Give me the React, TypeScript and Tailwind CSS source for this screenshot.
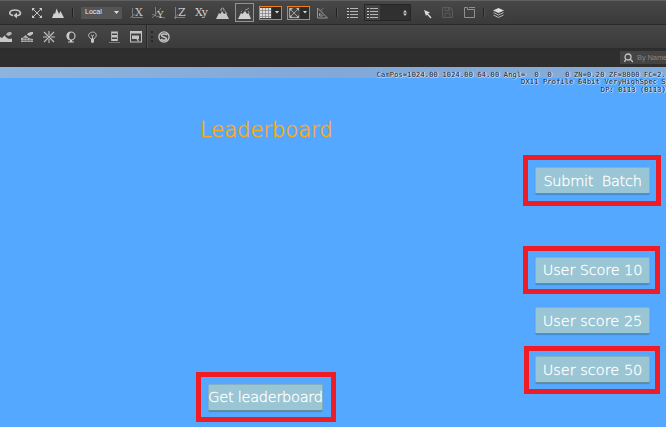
import type { ReactNode } from "react";

type IconProps = { w: number; h?: number; className?: string; children: ReactNode };

function Icon({ w, h = 12, className = "", children }: IconProps) {
  return (
    <svg
      width={w}
      height={h}
      viewBox={`0 0 ${w} ${h}`}
      fill="none"
      stroke="#c4c4c4"
      className={`shrink-0 ${className}`}
    >
      {children}
    </svg>
  );
}

function Separator({ className = "" }: { className?: string }) {
  return <div className={`h-[9px] w-0.5 shrink-0 border-l border-[#222] bg-[#505050] ${className}`} />;
}

function ActiveFrame({ className, children }: { className: string; children: ReactNode }) {
  return (
    <div className={`shrink-0 bg-[#ee7c18] p-px ${className}`}>
      <div className="flex h-full w-full items-center justify-center bg-[#444]">{children}</div>
    </div>
  );
}

function Caret() {
  return (
    <span className="flex h-full flex-1 items-center justify-center bg-[#2c2c2c]">
      <svg width="4" height="3" viewBox="0 0 4 3">
        <path d="M0 0h4L2 2.5z" fill="#ddd" />
      </svg>
    </span>
  );
}

function ListGlyph() {
  return (
    <>
      <path d="M3 1.500h8M3 4.500h8M3 7.500h8M3 10.500h8" stroke="#b4b4b4" />
      <path d="M0 1.500h2M0 4.500h2M0 7.500h2M0 10.500h2" stroke="#cfcfcf" />
    </>
  );
}

const axisLines = {
  X: "M2.500 1v9.500H13M0 11l5-4",
  Y: "M3.500 0v9L13 11M0 11L9 1M0 7l4 2",
  Z: "M1.500 0v12M0 10.500h11M1 11l3-4",
};

function AxisIcon({ letter, className }: { letter: "X" | "Y" | "Z"; className: string }) {
  return (
    <Icon w={14} className={className}>
      <path d={axisLines[letter]} stroke="#858585" strokeWidth=".9" />
      <text
        x={letter === "Z" ? 4 : 5}
        y={letter === "Y" ? 10.5 : 8.5}
        fill="#c5c5c5"
        stroke="none"
        fontSize={letter === "Y" ? 10 : 11}
        className="font-['DejaVu_Serif',serif]"
      >
        {letter}
      </text>
    </Icon>
  );
}

function MainToolbar() {
  return (
    <div className="flex h-[25px] items-center border-t border-b border-t-[#606060] border-b-[#292929] bg-linear-to-b from-[#474747] to-[#3a3a3a]">
      <Icon w={13} className="ml-[9px]">
        <path d="M4 8.500C-1 7.500 0 3 6 3s7 4.500 3 5.500H7" strokeWidth="1.7" />
        <path d="M8 5.500v6L4.500 8.500z" fill="#c8c8c8" stroke="none" />
      </Icon>
      <Icon w={10} h={10} className="ml-[10px]">
        <path d="M1 1l8 8M9 1L1 9" strokeWidth="1" />
        <path d="M0 0h3L0 3zM10 0v3L7 0zM0 10V7l3 3zM10 10H7l3-3z" fill="#c8c8c8" stroke="none" />
      </Icon>
      <Icon w={12} h={10} className="ml-[10px]">
        <path d="M0 10l2-5 1 1 1.500-5.500L7 6l1.500-3L10 6l2 4z" fill="#d0d0d0" stroke="none" />
      </Icon>
      <Separator className="ml-[8px]" />
      <div className="ml-[7px] flex h-3 w-[41px] shrink-0 items-center justify-between rounded-[1px] bg-[#555] pr-[3px] pl-1 font-['Liberation_Sans',sans-serif] text-[7px] text-[#eee]">
        Local
        <svg width="5" height="3" viewBox="0 0 5 3">
          <path d="M0 0h5L2.500 3z" fill="#ddd" />
        </svg>
      </div>
      <AxisIcon letter="X" className="ml-[8px]" />
      <AxisIcon letter="Y" className="ml-[8px]" />
      <AxisIcon letter="Z" className="ml-[8px]" />
      <span className="ml-[7px] w-[14px] shrink-0 font-['DejaVu_Serif',serif] text-[11px] leading-3 tracking-[-1px] text-[#d2d2d2]">
        Xy
      </span>
      <Icon w={13} className="ml-[7px]">
        <path d="M0 12l3-6 1.500 1L6 4l2 3 2-1 3 6z" fill="#c8c8c8" stroke="none" />
        <path d="M5 4V2l1.500-1L8 2v2M9 4l2 3" stroke="#aaa" />
      </Icon>
      <ActiveFrame className="ml-[6px] h-[19px] w-[19px]">
        <Icon w={13}>
          <path d="M0 12l3-6 1.500 1L7 4l2 3 1.500-1L13 12z" fill="#d2d2d2" stroke="none" />
          <path d="M7 3l2-.5L11 1M10 4l1.500 2M3 5l1-1" stroke="#9a9a9a" />
        </Icon>
      </ActiveFrame>
      <ActiveFrame className="ml-[5px] h-[14px] w-[23px]">
        <Icon w={12}>
          <path d="M0 1h11v10H0z" fill="#dedede" stroke="none" />
          <path d="M2.500 1v10M5.500 1v10M8.500 1v10M0 3.500h11M0 6.500h11M0 9.500h11" stroke="#888" strokeWidth=".8" />
        </Icon>
        <Caret />
      </ActiveFrame>
      <ActiveFrame className="ml-[5px] h-[14px] w-[23px]">
        <Icon w={12}>
          <path d="M1.500 1v9.500H11M3 3l7 7M10 2L3 9" stroke="#999" />
          <path d="M2 1h3L2 4zM11 1v3L8 1zM2 11V8l3 3zM11 11H8l3-3z" fill="#bbb" stroke="none" />
        </Icon>
        <Caret />
      </ActiveFrame>
      <Icon w={12} className="ml-[6px]">
        <path d="M1.500 1v10h10zM3.500 6v3h3z" stroke="#959595" />
        <path d="M3 4l5-3M5 3l3 6" stroke="#777" strokeWidth=".8" />
      </Icon>
      <Separator className="ml-[8px]" />
      <Icon w={11} className="ml-[9px]">
        <ListGlyph />
      </Icon>
      <div className="ml-[6px] flex h-[17px] w-[47px] shrink-0 items-center justify-between rounded-[1px] border border-[#252525] bg-[#303030] pr-[3px]">
        <div className="flex h-full w-[15px] items-center justify-center bg-[#424242]">
          <Icon w={11}>
            <ListGlyph />
          </Icon>
        </div>
        <svg width="4" height="6" viewBox="0 0 4 6">
          <path d="M0 2.500L2 0l2 2.500zM0 3.500h4L2 6z" fill="#ccc" />
        </svg>
      </div>
      <Icon w={8} h={9} className="mt-1 ml-[13px]">
        <path d="M0 0l6 2.500-2 1L7.500 7.500l-1 1L3 4.500 2 6z" fill="#ddd" stroke="none" />
      </Icon>
      <Icon w={11} h={11} className="ml-[10px]">
        <path d="M.5.5h8l2 2v8H.5zM3 .5v3h5v-3M3 10V6h5v4M6.500 1v2" stroke="#5b5b5b" />
      </Icon>
      <Icon w={11} h={11} className="ml-[11px]">
        <path d="M.5 10.500V.5h3v2h7v8zM5 .5h6" stroke="#909090" />
      </Icon>
      <Separator className="ml-[8px]" />
      <Icon w={11} className="ml-[8px]">
        <path d="M0 3.500L5.500 1 11 3.500 5.500 6z" fill="#ddd" stroke="none" />
        <path d="M.5 5.500l5 2.500 5-2.500M.5 8l5 2.500 5-2.500" stroke="#b5b5b5" />
      </Icon>
    </div>
  );
}

function SecondToolbar() {
  return (
    <div className="flex h-6 items-center border-b border-[#2c2c2c] bg-linear-to-b from-[#464646] to-[#3b3b3b]">
      <Icon w={12}>
        <path d="M0 6l2 1 2.500-2.500L7 7l2 1 3-.5V11H0z" fill="#c8c8c8" stroke="none" />
        <path d="M6 4l1-2 2-1h2l1 2-3 2z" fill="#b4b4b4" stroke="none" />
      </Icon>
      <Icon w={13} className="ml-[9px]">
        <path d="M0 7l2-.5L4.500 4 7 6.500l2 1 3 .5v3H0z" fill="#b0b0b0" stroke="none" />
        <path d="M6 4l1-2 3-1h2v2l-3 2z" fill="#c4c4c4" stroke="none" />
        <path d="M0 9.500h12M2 7.500h5M3 6v5M6 7v4M9 8v3" stroke="#5b5b5b" strokeWidth=".6" />
      </Icon>
      <Icon w={12} className="ml-[9px]">
        <path d="M1 1l3.500 3.500M6 0v4M11 1L7.500 4.500M0 6h4M8 6h4M1 11l3.500-3.500M6 8v4M11 11L7.500 7.500M3.500 3.500l5 5M8.500 3.500l-5 5" strokeWidth="1.1" />
      </Icon>
      <Icon w={10} className="ml-[11px]">
        <circle cx="5" cy="5" r="4" strokeWidth="1.2" />
        <path d="M5 1C2 1 0 3 1 6s3 3 4 3C2 7 3 3 5 1zM4 9h2v1.500h2v1H2v-1h2z" fill="#ccc" stroke="none" />
      </Icon>
      <Icon w={9} className="ml-[12px]">
        <path d="M3 8C1 6 0 5 1 3s6-3 7 0-1 3-2 5zM3 4l1.500 1L6 4M4.500 5v3" strokeWidth=".9" />
        <path d="M3 8h3v3L5 12H4L3 11z" fill="#c4c4c4" stroke="none" />
      </Icon>
      <Icon w={11} className="ml-[12px]">
        <path d="M2 .5h7v2H2zM2 4h7v2.500H2zM2 8h7v2H2z" fill="#c6c6c6" stroke="none" />
        <path d="M2.500 1v9M8.500 1v9" stroke="#aaa" />
        <path d="M0 11.500h11" stroke="#777" />
      </Icon>
      <Icon w={12} className="ml-[10px]">
        <path d="M.5.5h11v10.500H.5z" strokeWidth="1.1" />
        <path d="M0 0h12v2.500H0zM2 4.500h7V8H8l1 2-1 .5L6.500 8H2z" fill="#c4c4c4" stroke="none" />
      </Icon>
      <div className="ml-[4px] h-full w-0.5 shrink-0 border-l border-[#282828] bg-[#505050]" />
      <div className="ml-[3px] h-[11px] w-0 shrink-0 border-l-2 border-dotted border-[#272727]" />
      <Icon w={12} className="ml-[5px]">
        <circle cx="6" cy="6" r="5.100" strokeWidth="1.4" />
        <path d="M9 4C8 2.500 3 2.500 3.500 4.500S9 6 8.500 8 4 9.500 3 8" strokeWidth="1.500" />
      </Icon>
    </div>
  );
}

function SearchBar() {
  return (
    <div className="flex h-[18px] justify-end bg-[#2e2e2e] pt-0.5">
      <div className="flex h-[13px] w-[46px] items-center bg-[#444] pl-1 font-['Liberation_Sans',sans-serif] text-[7.5px] tracking-[-0.1px] whitespace-nowrap text-[#858585]">
        <Icon w={9} h={10} className="mr-1">
          <circle cx="4" cy="4" r="3" strokeWidth="1.3" />
          <path d="M6 6l3 3M2 6L.5 9" strokeWidth="1.3" />
        </Icon>
        By Name
      </div>
    </div>
  );
}

function GameButton({ label, className = "" }: { label: string; className?: string }) {
  return (
    <button
      className={`flex h-[27px] w-[115px] shrink-0 items-center justify-center rounded-[2px] border border-[#84b2c3] border-b-[#668f9e] bg-[#99c5d4] text-[14.5px] font-extralight whitespace-pre text-white shadow-[0_1px_1px_#438ac5] [-webkit-text-stroke:0.3px_white] ${className}`}
    >
      {label}
    </button>
  );
}

function Highlight({ className, children }: { className: string; children: ReactNode }) {
  return <div className={`flex shrink-0 border-[5px] border-[#ee1c24] ${className}`}>{children}</div>;
}

const statText =
  "whitespace-pre text-right font-['DejaVu_Sans_Mono',monospace] text-[7px] leading-[7.5px] [text-shadow:1px_0_0_#e6eef5,0_1px_0_#c5d9ec]";

export default function App() {
  return (
    <div className="flex h-[427px] w-[666px] flex-col overflow-hidden bg-[#55a8ff] font-['DejaVu_Sans',sans-serif]">
      <MainToolbar />
      <SecondToolbar />
      <SearchBar />
      <div className="h-[10.5px] shrink-0 bg-linear-to-r from-[#8eb3dd] via-[#82a8d8] to-[#86add9]" />
      <div className={`-mt-[6px] h-[21.5px] shrink-0 text-[#102030] ${statText}`}>
        <p className="tracking-[0.17px]">CamPos=1024.00 1024.00 64.00 Angl=  0  0   0 ZN=0.20 ZF=8000 FC=2.</p>
        <p className="tracking-[0.18px]">DX11 Profile 64bit VeryHighSpec S</p>
        <p className="tracking-[0.13px]">DP: 0113 (0113)</p>
      </div>
      <main className="flex min-h-0 flex-1 justify-between pr-[5px] pl-[196px]">
        <section className="flex w-[140px] flex-col">
          <h1 className="mt-[23px] ml-[4px] h-7 text-[21px] leading-7 font-extralight whitespace-nowrap text-[#ffaa0a] [-webkit-text-stroke:0.5px_#ffaa0a]">
            Leaderboard
          </h1>
          <Highlight className="mt-[228px] h-[50px] w-[140px] pt-[7px] pl-[7px]">
            <GameButton label="Get leaderboard" className="tracking-[-0.26px]" />
          </Highlight>
        </section>
        <section className="flex w-[138px] flex-col pt-[62px]">
          <Highlight className="h-[51px] w-[138px] pt-[7px] pl-[7px]">
            <GameButton label="Submit  Batch" className="pt-0.5 tracking-[-0.28px]" />
          </Highlight>
          <Highlight className="mt-10 h-12 w-[137px] pt-[5.5px] pl-[7px]">
            <GameButton label="User Score 10" className="pt-0.5 tracking-[-0.14px]" />
          </Highlight>
          <GameButton label="User score 25" className="mt-[13px] ml-3 pt-0.5" />
          <Highlight className="mt-3 ml-px h-12 w-[136px] pt-[5px] pl-[6px]">
            <GameButton label="User score 50" className="pt-0.5" />
          </Highlight>
        </section>
      </main>
    </div>
  );
}
